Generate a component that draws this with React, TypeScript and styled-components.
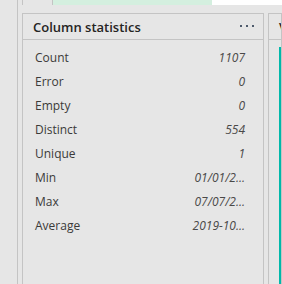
import React from "react";
import styled, { createGlobalStyle } from "styled-components";

const Global = createGlobalStyle`
  html, body { margin: 0; padding: 0; }
  body {
    width: 282px;
    height: 284px;
    overflow: hidden;
    background: #e6e6e6;
    font-family: "Open Sans", "Noto Sans", sans-serif;
  }
`;

const Page = styled.div`
  display: flex;
  width: 282px;
  height: 284px;
  background: #e6e6e6;
`;

const Splitter = styled.div`
  width: 17px;
  flex: none;
  border-right: 1px solid #c4c4c4;
`;

const Main = styled.div`
  flex: 1;
  min-width: 0;
  padding-left: 4px;
  display: flex;
  flex-direction: column;
  gap: 8px;
`;

const TopStrip = styled.div`
  display: flex;
  height: 5px;
  flex: none;
`;

const StripCell = styled.div<{ $bg: string; $w?: number; $bordered?: boolean }>`
  background: ${(p) => p.$bg};
  ${(p) => (p.$w ? `width: ${p.$w}px; flex: none;` : "flex: 1;")}
  ${(p) => (p.$bordered ? "border-left: 1px solid #c4c4c4; border-right: 1px solid #c4c4c4;" : "")}
  box-sizing: border-box;
`;

const Panels = styled.div`
  flex: 1;
  display: flex;
  gap: 4px;
  min-height: 0;
`;

const Panel = styled.section<{ $w?: number }>`
  ${(p) => (p.$w ? `width: ${p.$w}px; flex: none;` : "flex: 1; min-width: 0;")}
  box-sizing: border-box;
  border: 1px solid #c4c4c4;
  border-bottom: none;
  display: flex;
  flex-direction: column;
  overflow: hidden;
`;

const Header = styled.header`
  height: 25px;
  flex: none;
  border-bottom: 1px solid #c4c4c4;
  display: flex;
  align-items: center;
  padding: 0 9px 0 10px;
  position: relative;
`;

const Title = styled.h2`
  margin: 0;
  font-family: "Open Sans", "Noto Sans", sans-serif;
  font-weight: 600;
  font-size: 13px;
  color: #252423;
  white-space: nowrap;
  flex: 1;
  line-height: 18px;
  padding-top: 1px;
`;

const More = styled.div`
  display: flex;
  gap: 4px;
  align-items: center;
  margin-top: -1px;
`;

const Dot = styled.span`
  width: 2px;
  height: 2px;
  background: #4e5b6c;
`;

const Body = styled.div`
  padding: 5px 18px 0 12px;
  display: flex;
  flex-direction: column;
`;

const Row = styled.div`
  height: 24px;
  display: flex;
  align-items: center;
  justify-content: space-between;
  font-size: 12px;
  color: #3b3a39;
`;

const Label = styled.span`
  white-space: nowrap;
`;

const Value = styled.span`
  font-style: italic;
  color: #4a4948;
  white-space: nowrap;
`;

const Bar = styled.div`
  position: absolute;
  left: 10px;
  top: 7px;
  width: 10px;
  bottom: 0;
  background: #01b8aa;
`;

const ChartArea = styled.div`
  flex: 1;
  position: relative;
`;

const stats: [string, string][] = [
  ["Count", "1107"],
  ["Error", "0"],
  ["Empty", "0"],
  ["Distinct", "554"],
  ["Unique", "1"],
  ["Min", "01/01/2..."],
  ["Max", "07/07/2..."],
  ["Average", "2019-10..."],
];

export default function App() {
  return (
    <>
      <Global />
      <Page>
        <Splitter />
        <Main>
          <TopStrip>
            <StripCell $bg="#e6e6e6" $w={31} $bordered />
            <StripCell $bg="#d4efdf" $w={159} />
            <StripCell $bg="#ffffff" />
          </TopStrip>
          <Panels>
            <Panel $w={242}>
              <Header>
                <Title>Column statistics</Title>
                <More>
                  <Dot />
                  <Dot />
                  <Dot />
                </More>
              </Header>
              <Body>
                {stats.map(([k, v]) => (
                  <Row key={k}>
                    <Label>{k}</Label>
                    <Value>{v}</Value>
                  </Row>
                ))}
              </Body>
            </Panel>
            <Panel>
              <Header>
                <Title>Value distribution</Title>
              </Header>
              <ChartArea>
                <Bar />
              </ChartArea>
            </Panel>
          </Panels>
        </Main>
      </Page>
    </>
  );
}
